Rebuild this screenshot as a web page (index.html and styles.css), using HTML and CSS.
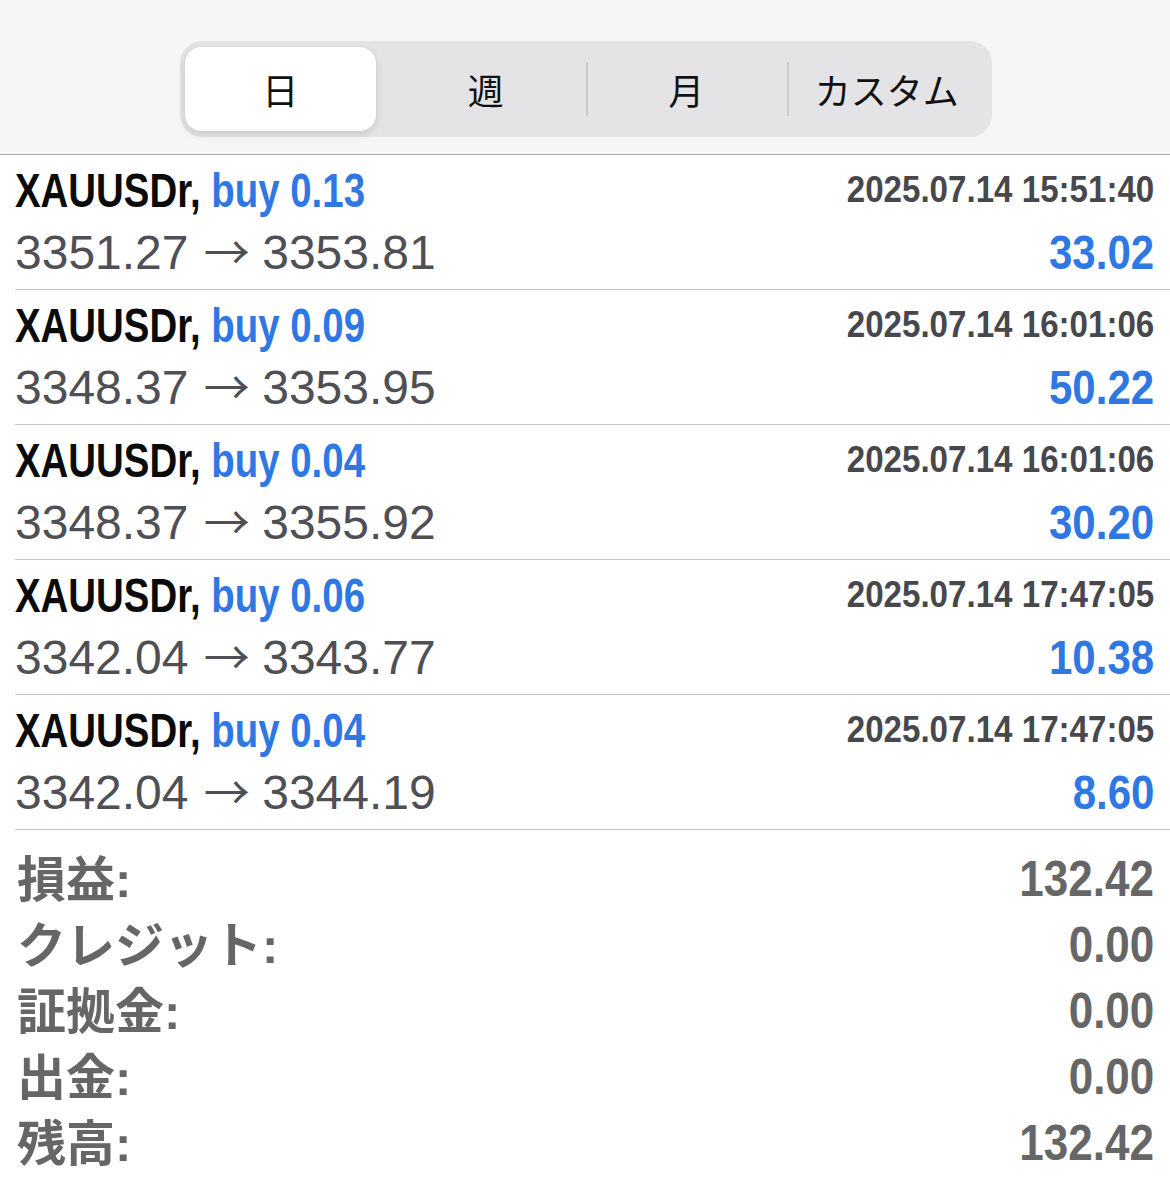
FILE: index.html
```html
<!DOCTYPE html>
<html lang="ja">

<head>
    <meta charset="UTF-8">
    <meta name="viewport" content="width=device-width, initial-scale=1.0">
    <title>履歴</title>
    <link rel="stylesheet" href="styles.css">
</head>

<body>
    <div id="header">
        <div class="segments">
            <div class="seg active">日</div>
            <div class="seg">週</div>
            <div class="seg divided">月</div>
            <div class="seg divided">カスタム</div>
        </div>
    </div>

    <div id="deals">
        <div class="deal">
            <div class="line">
                <div class="title">XAUUSDr, <span class="blue">buy 0.13</span></div>
                <div class="time">2025.07.14 15:51:40</div>
            </div>
            <div class="line">
                <div class="price">3351.27 <span class="arrow">→</span> 3353.81</div>
                <div class="profit">33.02</div>
            </div>
        </div>
        <div class="deal">
            <div class="line">
                <div class="title">XAUUSDr, <span class="blue">buy 0.09</span></div>
                <div class="time">2025.07.14 16:01:06</div>
            </div>
            <div class="line">
                <div class="price">3348.37 <span class="arrow">→</span> 3353.95</div>
                <div class="profit">50.22</div>
            </div>
        </div>
        <div class="deal">
            <div class="line">
                <div class="title">XAUUSDr, <span class="blue">buy 0.04</span></div>
                <div class="time">2025.07.14 16:01:06</div>
            </div>
            <div class="line">
                <div class="price">3348.37 <span class="arrow">→</span> 3355.92</div>
                <div class="profit">30.20</div>
            </div>
        </div>
        <div class="deal">
            <div class="line">
                <div class="title">XAUUSDr, <span class="blue">buy 0.06</span></div>
                <div class="time">2025.07.14 17:47:05</div>
            </div>
            <div class="line">
                <div class="price">3342.04 <span class="arrow">→</span> 3343.77</div>
                <div class="profit">10.38</div>
            </div>
        </div>
        <div class="deal">
            <div class="line">
                <div class="title">XAUUSDr, <span class="blue">buy 0.04</span></div>
                <div class="time">2025.07.14 17:47:05</div>
            </div>
            <div class="line">
                <div class="price">3342.04 <span class="arrow">→</span> 3344.19</div>
                <div class="profit">8.60</div>
            </div>
        </div>
    </div>

    <div id="summary">
        <div class="sum-row"><span class="label">損益:</span><span class="value">132.42</span></div>
        <div class="sum-row"><span class="label">クレジット:</span><span class="value">0.00</span></div>
        <div class="sum-row"><span class="label">証拠金:</span><span class="value">0.00</span></div>
        <div class="sum-row"><span class="label">出金:</span><span class="value">0.00</span></div>
        <div class="sum-row"><span class="label">残高:</span><span class="value">132.42</span></div>
    </div>
</body>

</html>
```

FILE: styles.css
```css
body {
    margin: 0;
    background: #fff;
    font-family: "Liberation Sans", "Noto Sans CJK JP", sans-serif;
}

#header {
    background: #f6f6f6;
    padding: 41px 0 17px;
    border-bottom: 1px solid #a6a6a6;
    display: flex;
    justify-content: center;
}

.segments {
    width: 812px;
    height: 96px;
    box-sizing: border-box;
    padding: 6px 5px;
    background: #e4e4e6;
    border-radius: 22px;
    display: grid;
    grid-template-columns: repeat(4, 1fr);
    margin-left: 2px;
}

.seg {
    position: relative;
    display: flex;
    justify-content: center;
    align-items: center;
    font-family: "Noto Sans CJK JP", sans-serif;
    font-size: 36px;
    color: #111;
}

.seg.active {
    background: #fff;
    border-radius: 16px;
    margin-right: 10px;
    box-shadow: 0 3px 8px rgba(0, 0, 0, 0.12), 0 0 1px rgba(0, 0, 0, 0.1);
}

.seg.divided::before {
    content: "";
    position: absolute;
    left: 0;
    top: 15px;
    bottom: 15px;
    width: 2px;
    background: #cbcbcd;
}

.deal {
    margin-left: 15px;
    padding: 4px 16px 6px 0;
    border-bottom: 1px solid #c8c8c8;
}

.line {
    display: flex;
    justify-content: space-between;
    align-items: center;
    height: 62px;
}

/* narrow bold numbers like the app font */
.title,
.time,
.profit,
.value {
    font-weight: bold;
    white-space: nowrap;
}

.title {
    font-size: 48px;
    color: #0b0b0b;
    transform: scaleX(0.8);
    transform-origin: left center;
}

.blue {
    color: #2f78e3;
}

.time {
    font-size: 36px;
    color: #48484c;
    transform: scaleX(0.92);
    transform-origin: right center;
}

.price {
    font-size: 48px;
    color: #4f4f54;
    white-space: nowrap;
}

.arrow {
    font-family: "Noto Sans CJK JP", sans-serif;
    font-size: 46px;
    line-height: 0;
    margin: 0 -1px 0 2px;
}

.profit {
    font-size: 48px;
    color: #2f78e3;
    transform: scaleX(0.875);
    transform-origin: right center;
}

#summary {
    padding: 16px 16px 0 17px;
}

.sum-row {
    display: flex;
    justify-content: space-between;
    align-items: center;
    height: 66px;
    color: #666;
}

.label {
    font-family: "Liberation Sans", "Noto Sans CJK JP", sans-serif;
    font-weight: bold;
    font-size: 49px;
    margin-top: -8px;
}

.value {
    font-size: 50px;
    transform: scaleX(0.88);
    transform-origin: right center;
}
```
